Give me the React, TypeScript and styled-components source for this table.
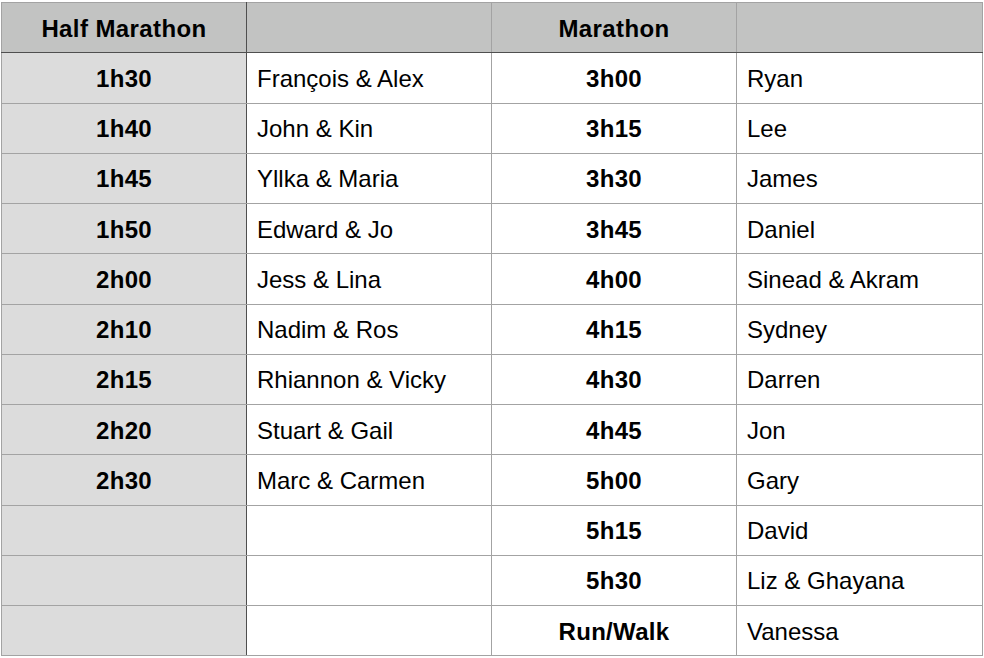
import React from "react";
import styled, { createGlobalStyle } from "styled-components";

const Global = createGlobalStyle`
  html, body { margin: 0; padding: 0; background: #ffffff; }
  body { font-family: "Liberation Sans", Arial, Helvetica, sans-serif; }
`;

const Page = styled.div`
  padding: 2px 0 0 1px;
`;

const Table = styled.table`
  border-collapse: collapse;
  table-layout: fixed;
  width: 981px;
  font-size: 24px;
  color: #000;
`;

const Row = styled.tr`
  height: 50.25px;
`;

const HeadCell = styled.th<{ $first?: boolean }>`
  background: #c2c3c2;
  border: 1px solid #a3a3a3;
  border-bottom: 1px solid #4f4f4f;
  ${(p) => (p.$first ? "border-right: 1px solid #4f4f4f;" : "")}
  font-weight: 700;
  letter-spacing: 0.4px;
  text-align: center;
  padding: 2px 0 0 0;
  vertical-align: middle;
`;

const TimeCell = styled.td<{ $first?: boolean }>`
  background: ${(p) => (p.$first ? "#dcdcdc" : "#ffffff")};
  border: 1px solid #a3a3a3;
  ${(p) => (p.$first ? "border-right: 1px solid #4f4f4f;" : "")}
  font-weight: 700;
  letter-spacing: 0.3px;
  text-align: center;
  padding: 2px 0 0 0;
  vertical-align: middle;
`;

const NameCell = styled.td`
  background: #ffffff;
  border: 1px solid #a3a3a3;
  text-align: left;
  padding: 2px 0 0 10px;
  vertical-align: middle;
  white-space: nowrap;
`;

const half: [string, string][] = [
  ["1h30", "François & Alex"],
  ["1h40", "John & Kin"],
  ["1h45", "Yllka & Maria"],
  ["1h50", "Edward & Jo"],
  ["2h00", "Jess & Lina"],
  ["2h10", "Nadim & Ros"],
  ["2h15", "Rhiannon & Vicky"],
  ["2h20", "Stuart & Gail"],
  ["2h30", "Marc & Carmen"],
  ["", ""],
  ["", ""],
  ["", ""],
];

const full: [string, string][] = [
  ["3h00", "Ryan"],
  ["3h15", "Lee"],
  ["3h30", "James"],
  ["3h45", "Daniel"],
  ["4h00", "Sinead & Akram"],
  ["4h15", "Sydney"],
  ["4h30", "Darren"],
  ["4h45", "Jon"],
  ["5h00", "Gary"],
  ["5h15", "David"],
  ["5h30", "Liz & Ghayana"],
  ["Run/Walk", "Vanessa"],
];

export default function App() {
  return (
    <>
      <Global />
      <Page>
        <Table>
          <colgroup>
            <col style={{ width: 245 }} />
            <col style={{ width: 245 }} />
            <col style={{ width: 245 }} />
            <col style={{ width: 246 }} />
          </colgroup>
          <thead>
            <Row>
              <HeadCell $first>Half Marathon</HeadCell>
              <HeadCell></HeadCell>
              <HeadCell>Marathon</HeadCell>
              <HeadCell></HeadCell>
            </Row>
          </thead>
          <tbody>
            {half.map((h, i) => (
              <Row key={i}>
                <TimeCell $first>{h[0]}</TimeCell>
                <NameCell>{h[1]}</NameCell>
                <TimeCell>{full[i][0]}</TimeCell>
                <NameCell>{full[i][1]}</NameCell>
              </Row>
            ))}
          </tbody>
        </Table>
      </Page>
    </>
  );
}
